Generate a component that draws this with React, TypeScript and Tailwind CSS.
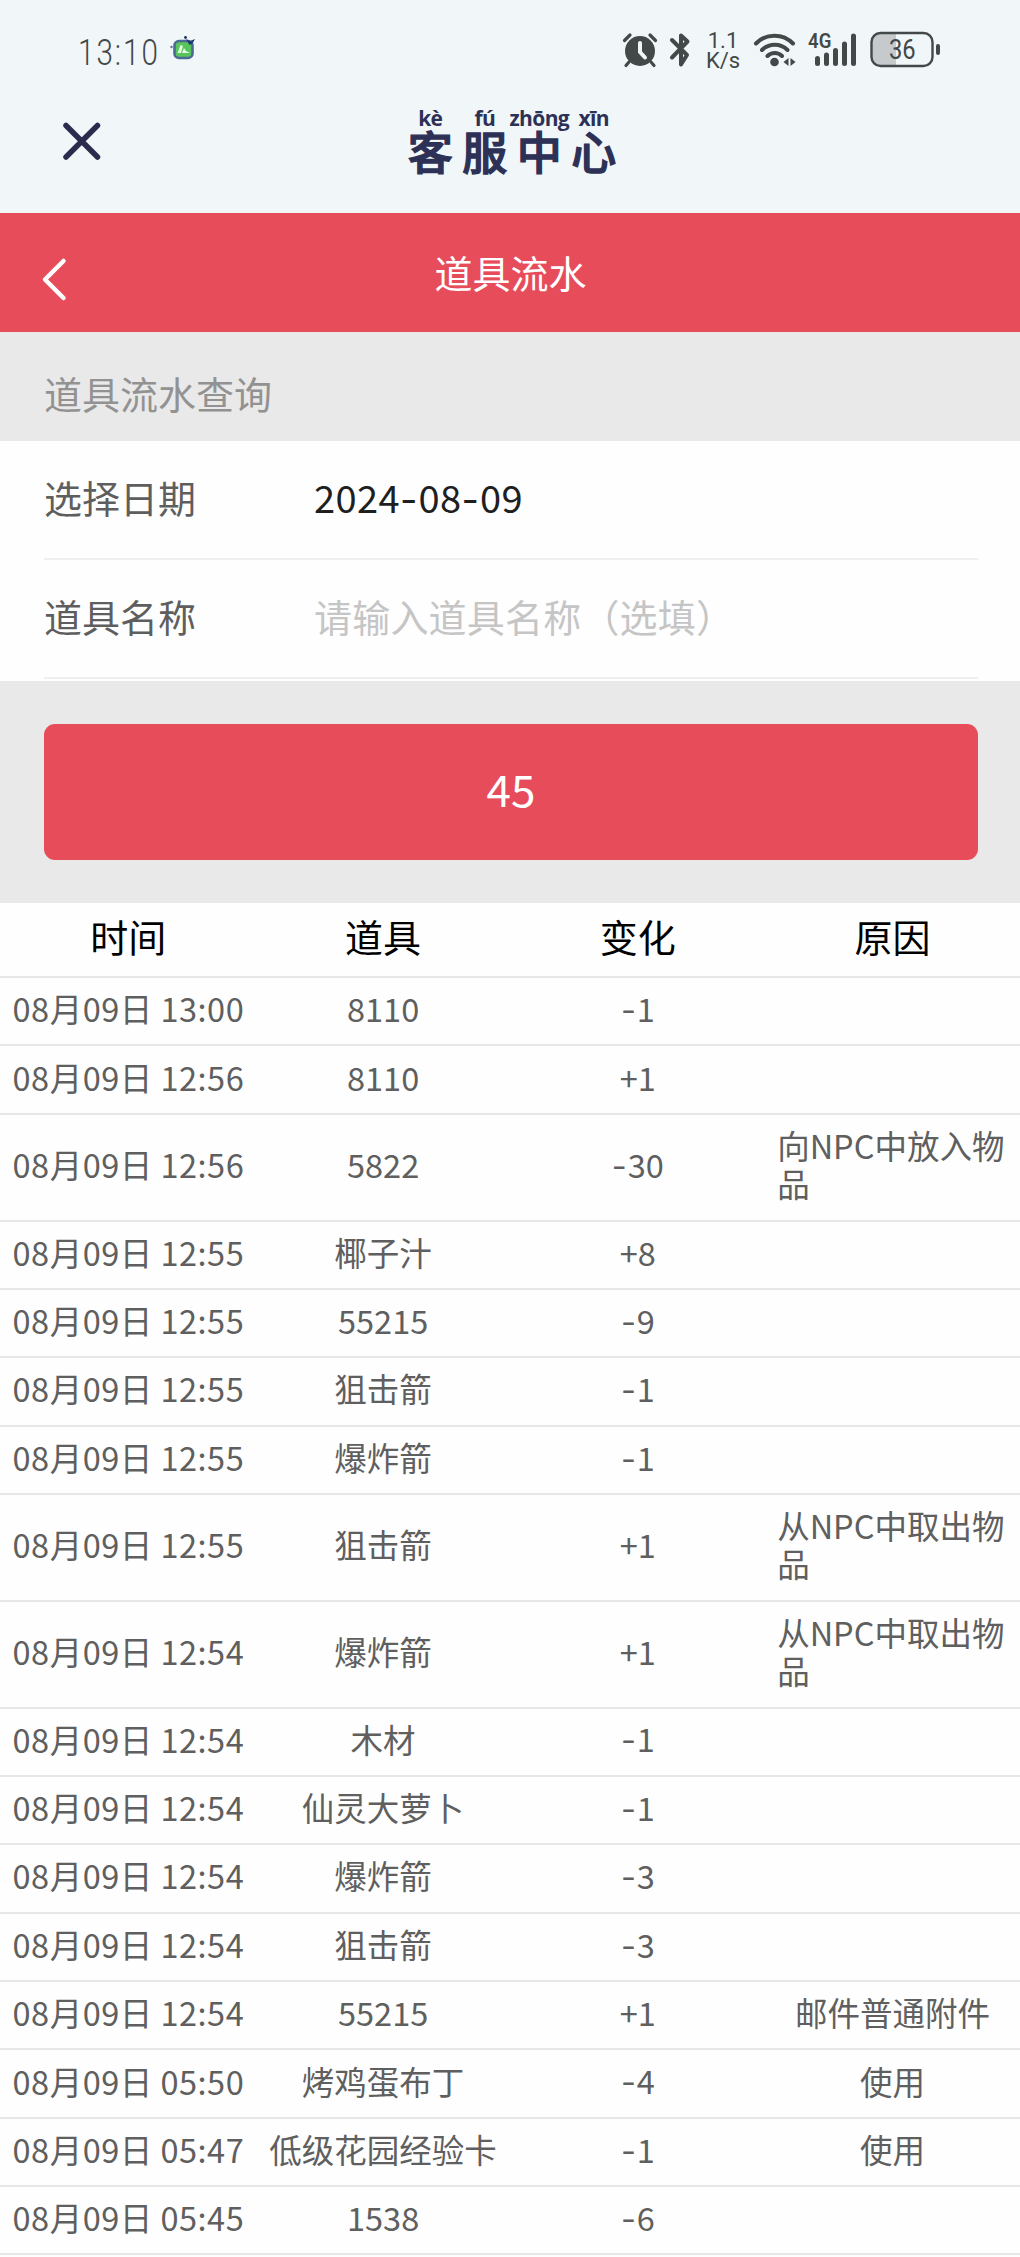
import React from "react";

type Row = { time: string; item: string; change: string; reason?: string; tall?: boolean };

const rows: Row[] = [
  { time: "08月09日 13:00", item: "8110", change: "-1" },
  { time: "08月09日 12:56", item: "8110", change: "+1" },
  { time: "08月09日 12:56", item: "5822", change: "-30", reason: "向NPC中放入物品", tall: true },
  { time: "08月09日 12:55", item: "椰子汁", change: "+8" },
  { time: "08月09日 12:55", item: "55215", change: "-9" },
  { time: "08月09日 12:55", item: "狙击箭", change: "-1" },
  { time: "08月09日 12:55", item: "爆炸箭", change: "-1" },
  { time: "08月09日 12:55", item: "狙击箭", change: "+1", reason: "从NPC中取出物品", tall: true },
  { time: "08月09日 12:54", item: "爆炸箭", change: "+1", reason: "从NPC中取出物品", tall: true },
  { time: "08月09日 12:54", item: "木材", change: "-1" },
  { time: "08月09日 12:54", item: "仙灵大萝卜", change: "-1" },
  { time: "08月09日 12:54", item: "爆炸箭", change: "-3" },
  { time: "08月09日 12:54", item: "狙击箭", change: "-3" },
  { time: "08月09日 12:54", item: "55215", change: "+1", reason: "邮件普通附件" },
  { time: "08月09日 05:50", item: "烤鸡蛋布丁", change: "-4", reason: "使用" },
  { time: "08月09日 05:47", item: "低级花园经验卡", change: "-1", reason: "使用" },
  { time: "08月09日 05:45", item: "1538", change: "-6" },
];

const title = [
  { han: "客", pinyin: "kè" },
  { han: "服", pinyin: "fú" },
  { han: "中", pinyin: "zhōng" },
  { han: "心", pinyin: "xīn" },
];

/* Hyphens are set in Inter, whose dash is wider than the CJK font's. */
function Dashed({ text }: { text: string }) {
  return (
    <>
      {text.split(/(-)/).map((part, i) =>
        part === "-" ? (
          <span key={i} className="font-['Inter'] leading-none tracking-[1px]">-</span>
        ) : (
          part
        )
      )}
    </>
  );
}

function AppBadge() {
  return (
    <svg className="ml-[9px] mt-[34px] h-[28px] w-[28px]" viewBox="0 0 28 28">
      <rect x="5.500" y="7" width="18" height="17" rx="4.500" fill="#58c45c" stroke="#4a6a94" strokeWidth="2.600" />
      <path d="M8.500 19l3-8 2.500 1-2 7zM13 19l2-5 2 3 4 2z" fill="#e2fbe0" />
      <path d="M17 5l4 2 5-2-2.500 4.500-3 1.500z" fill="#1d3a76" />
      <circle cx="16.500" cy="3.500" r="1.400" fill="#1d2f55" />
      <circle cx="2.500" cy="13" r="1.200" fill="#5b7190" />
    </svg>
  );
}

function StatusBar() {
  return (
    <div className="flex h-[96px] items-start pl-[78px] text-[#434848]">
      <div className="mt-[30px] w-[82px]">
        <span className="inline-block origin-left scale-x-[0.8] whitespace-nowrap font-['Roboto'] text-[37px] font-light leading-[46px] tracking-[2.500px]">
          13:10
        </span>
      </div>
      <AppBadge />
      <svg className="ml-[425px] mt-[32px] h-[36px] w-[36px]" viewBox="0 0 36 36" fill="none" stroke="#434848" strokeWidth="3.200" strokeLinecap="round">
        <circle cx="18" cy="19" r="15" fill="#434848" stroke="none" />
        <path d="M2.500 8.500L8 3M33.500 8.500L28 3M7 30l-3 3.500M29 30l3 3.500" />
        <path d="M18 11v9l5 5.500" stroke="#f1f5f9" strokeWidth="4" />
      </svg>
      <svg className="ml-[11px] mt-[32px] h-[36px] w-[22px]" viewBox="0 0 22 36" fill="none" stroke="#434848" strokeWidth="4" strokeLinecap="round" strokeLinejoin="round">
        <path d="M3 8l15 15-6 9.500V3.500l6.500 6L3 25.500" />
      </svg>
      <div className="ml-[14px] mt-[31px] flex w-[36px] flex-col items-center font-['Roboto'] text-[22px] leading-[20px]">
        <span>1.1</span>
        <span>K/s</span>
      </div>
      <svg className="ml-[12px] mt-[32px] h-[36px] w-[44px]" viewBox="0 0 44 36" fill="none" stroke="#434848" strokeWidth="4" strokeLinecap="round">
        <path d="M3 11.500C13 1 30 1 40 11.500M9 18c7-7 18.500-7 25.500 0M14.500 24c4-4 10.500-4 14.500 0" />
        <circle cx="21.500" cy="30" r="4.300" fill="#434848" stroke="none" />
        <path d="M35.500 26v8l-5-4zM37.500 26v8l5-4z" fill="#434848" stroke="none" />
      </svg>
      <div className="relative ml-[11px] mt-[32px] h-[36px] w-[52px]">
        <svg className="h-[36px] w-[52px]" viewBox="0 0 52 36">
          <g fill="#434848">
            <rect x="7" y="24" width="5" height="10" rx="2.500" />
            <rect x="16" y="20.500" width="5" height="13.500" rx="2.500" />
            <rect x="25" y="16" width="5" height="18" rx="2.500" />
            <rect x="34" y="9.500" width="5" height="24.500" rx="2.500" />
            <rect x="43" y="1.500" width="5" height="32.500" rx="2.500" />
          </g>
        </svg>
        <span className="absolute left-0 top-[-2px] origin-left scale-x-[0.93] font-['Roboto'] text-[20px] font-semibold leading-[23px]">4G</span>
      </div>
      <div className="relative ml-[10px] mt-[31px] h-[38px] w-[72px]">
        <svg className="h-[38px] w-[72px]" viewBox="0 0 72 38">
          <path d="M10 2H26V35H10A8 8 0 0 1 2 27V10A8 8 0 0 1 10 2Z" fill="#c6cacd" />
          <rect x="1.500" y="2" width="61" height="33" rx="9" fill="none" stroke="#434848" strokeWidth="2.400" />
          <rect x="66" y="13" width="4" height="11" rx="2" fill="#434848" />
        </svg>
        <span className="absolute left-[19px] top-[4px] origin-left scale-x-[0.88] font-['Roboto'] text-[27px] leading-[31px]">36</span>
      </div>
    </div>
  );
}

function AppTitle() {
  return (
    <div className="flex h-[117px] items-start pl-[61px] text-[#2d3156]">
      <svg className="mt-[24px] h-[42px] w-[42px]" viewBox="0 0 42 42" fill="none" stroke="#2b2b4e" strokeWidth="5.500" strokeLinecap="round">
        <path d="M5 5.500L36.500 37M36.500 5.500L5 37" />
      </svg>
      <div className="ml-[300px] flex">
        {title.map((t) => (
          <div key={t.han} className="flex w-[54.500px] flex-col items-center">
            <span className="mt-[12px] whitespace-nowrap font-['Open_Sans'] text-[21px] font-bold leading-[20px] tracking-[-0.6px]">{t.pinyin}</span>
            <span className="text-[45px] font-medium leading-[46px] [-webkit-text-stroke:1.300px_#2d3156]">{t.han}</span>
          </div>
        ))}
      </div>
    </div>
  );
}

function Field({ label, children }: { label: string; children: React.ReactNode }) {
  return (
    <div className="ml-[44px] mr-[42px] flex h-[119px] items-center border-b-2 border-[#efefef] pb-[6px] text-[38px]">
      <span className="w-[270px] text-[#5e5e5e]">{label}</span>
      {children}
    </div>
  );
}

export default function App() {
  return (
    <div className="flex h-[2257px] w-[1020px] flex-col overflow-hidden bg-[#fefefe] font-['Noto_Sans_CJK_SC',sans-serif]">
      <div className="h-[213px] shrink-0 bg-[#f1f6f9]">
        <StatusBar />
        <AppTitle />
      </div>

      <header className="relative flex h-[119px] shrink-0 items-center justify-center bg-[#e74c5b] text-[38px] text-white">
        <svg className="absolute left-[41px] top-[43px] h-[46px] w-[28px]" viewBox="0 0 28 46" fill="none" stroke="#fff" strokeWidth="4.500" strokeLinecap="round" strokeLinejoin="round">
          <path d="M22.500 5L4 23.500l18.500 18.500" />
        </svg>
        <h1 className="pb-[2px] pl-[1px]">道具流水</h1>
      </header>

      <div className="flex h-[109px] shrink-0 items-center bg-[#e9e9e9] pl-[44px] pt-[12px] text-[38px] text-[#929292]">
        道具流水查询
      </div>

      <div className="h-[240px] shrink-0">
        <Field label="选择日期">
          <span className="tracking-[0.4px] text-[#1f1f1f]"><Dashed text="2024-08-09" /></span>
        </Field>
        <Field label="道具名称">
          <span className="tracking-[0.2px] text-[#c5c5c5]">请输入道具名称（选填）</span>
        </Field>
      </div>

      <div className="h-[222px] shrink-0 bg-[#e9e9e9] pl-[44px] pr-[42px] pt-[43px]">
        <button className="flex h-[136px] w-full items-center justify-center rounded-[11px] bg-[#e74c5b] pb-[8px] text-[44px] text-white">
          45
        </button>
      </div>

      <div className="grid h-[75px] shrink-0 grid-cols-4 items-center border-b-2 border-[#e7e7e7] pb-[9px] pl-[1px] text-center text-[38px] text-black">
        <span>时间</span>
        <span>道具</span>
        <span>变化</span>
        <span>原因</span>
      </div>
      {rows.map((r, i) => (
        <div
          key={i}
          className={`grid shrink-0 grid-cols-4 items-center justify-items-center border-b-2 border-[#e7e7e7] pb-[6px] pl-[1px] text-[32.500px] leading-[38px] text-[#5f5f5f] ${r.tall ? "h-[106.800px]" : "h-[68.370px]"}`}
        >
          <span className="whitespace-nowrap tracking-[0.5px]">{r.time}</span>
          <span className="whitespace-nowrap">{r.item}</span>
          <span><Dashed text={r.change} /></span>
          <span className={r.tall ? "w-[231px]" : ""}>{r.reason}</span>
        </div>
      ))}
    </div>
  );
}
